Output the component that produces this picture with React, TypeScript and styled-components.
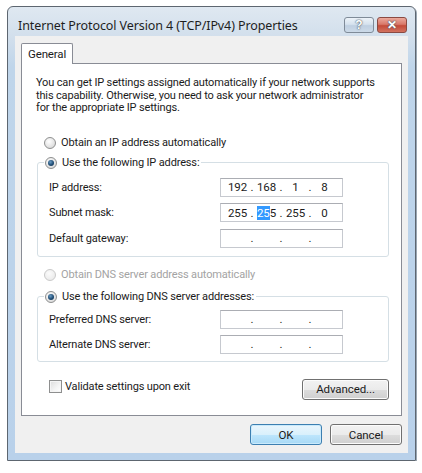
import { createGlobalStyle, styled } from 'styled-components';

const uiFont = `Roboto, "Noto Sans", sans-serif`;

const GlobalStyle = createGlobalStyle`
  html, body {
    margin: 0;
    padding: 0;
    background: #ffffff;
  }
  body {
    font-family: ${uiFont};
    font-size: 11px;
    letter-spacing: -0.15px;
    color: #1b1b1b;
  }
`;

const Window = styled.div`
  box-sizing: border-box;
  margin: 6px 0 0 7px;
  width: 409px;
  height: 455px;
  border: 1px solid #5d6670;
  border-radius: 6px 6px 0 0;
  padding: 0 7px 7px 7px;
  background: linear-gradient(to bottom, #dfe8f1 0px, #d2dfec 30px, #bfd5ea 60px, #b9d1ea 100%);
  box-shadow: 1px 1px 0 #9aa6b2;
  display: flex;
  flex-direction: column;
`;

const TitleBar = styled.div`
  box-sizing: border-box;
  height: 29px;
  display: flex;
  align-items: center;
  justify-content: space-between;
  padding: 7px 1px 0 3px;
  flex-shrink: 0;
`;

const Title = styled.div`
  font-family: "Noto Sans", sans-serif;
  font-size: 12.5px;
  letter-spacing: -0.1px;
  color: #1e1e1e;
`;

const CaptionButtons = styled.div`
  display: flex;
  gap: 3px;
`;

const CaptionButton = styled.div<{ $close?: boolean }>`
  box-sizing: border-box;
  width: 30px;
  height: 16px;
  border: 1px solid ${(p) => (p.$close ? '#8a4a42' : '#7f8b98')};
  border-radius: 3px;
  background: ${(p) =>
    p.$close
      ? 'linear-gradient(to bottom, #eba99c 0%, #d9796a 45%, #c44b39 55%, #d2725f 100%)'
      : 'linear-gradient(to bottom, #edf3f9 0%, #d6e2ee 45%, #bfcfe1 55%, #ccdae8 100%)'};
  display: flex;
  align-items: center;
  justify-content: center;
  color: #ffffff;
  font-family: "Liberation Sans", sans-serif;
  font-weight: bold;
  font-size: 12px;
  letter-spacing: 0;
  text-shadow: 0 0 2px #4a5866, 0 0 1px #4a5866;
  line-height: 1;
`;

const Client = styled.div`
  flex: 1;
  background: #f0f0f0;
  padding: 7px 6px 7px 6px;
  display: flex;
  flex-direction: column;
`;

const TabStrip = styled.div`
  display: flex;
  position: relative;
  z-index: 1;
  margin-bottom: -1px;
  flex-shrink: 0;
`;

const Tab = styled.div`
  box-sizing: border-box;
  width: 52px;
  height: 21px;
  border: 1px solid #898c95;
  border-bottom: none;
  border-radius: 2px 2px 0 0;
  background: #ffffff;
  padding: 3px 0 0 6px;
  font-size: 11.5px;
`;

const Panel = styled.div`
  box-sizing: border-box;
  border: 1px solid #898c95;
  background: #ffffff;
  height: 353px;
  flex-shrink: 0;
  padding: 13px 12px 13px 14px;
  display: flex;
  flex-direction: column;
`;

const Intro = styled.p`
  margin: 0;
  line-height: 12.5px;
  white-space: nowrap;
`;

const RadioRow = styled.label<{ $disabled?: boolean; $top: number }>`
  display: flex;
  align-items: center;
  gap: 5px;
  height: 16px;
  margin-top: ${(p) => p.$top}px;
  padding-left: 8px;
  color: ${(p) => (p.$disabled ? '#a3a3a3' : '#1b1b1b')};
`;

const RadioDot = styled.span<{ $checked?: boolean; $disabled?: boolean }>`
  box-sizing: border-box;
  width: 12px;
  height: 12px;
  border-radius: 50%;
  border: 1px solid ${(p) => (p.$disabled ? '#c9c9c9' : '#8e8f8f')};
  background: ${(p) =>
    p.$disabled
      ? 'radial-gradient(circle at 40% 35%, #fbfbfb 0%, #ececec 70%)'
      : 'radial-gradient(circle at 40% 35%, #ffffff 0%, #e3e3e3 60%, #cfcfcf 100%)'};
  display: flex;
  align-items: center;
  justify-content: center;
  flex-shrink: 0;

  &::after {
    content: '';
    display: ${(p) => (p.$checked ? 'block' : 'none')};
    width: 6px;
    height: 6px;
    border-radius: 50%;
    background: radial-gradient(circle at 40% 35%, #6a9cc4 0%, #1f4c74 55%, #10304e 100%);
  }
`;

const Group = styled.fieldset<{ $top: number; $gap: number; $inset: number; $bottom: number }>`
  margin: ${(p) => p.$top}px 0 0 1px;
  padding: 0 0 ${(p) => p.$bottom}px 0;
  border: 1px solid #d5dfe5;
  border-radius: 3px;
  min-width: 0;

  & > div {
    row-gap: ${(p) => p.$gap}px;
    padding-top: ${(p) => p.$inset}px;
  }
`;

const Legend = styled.legend`
  margin-left: 6px;
  padding: 0 2px 0 1px;
  background: #ffffff;
`;

const LegendRadio = styled(RadioRow)`
  padding-left: 0;
`;

const FieldGrid = styled.div`
  display: grid;
  grid-template-columns: 171px 123px;
  padding-left: 11px;
  align-items: center;
`;

const FieldLabel = styled.span``;

const IpBox = styled.div`
  box-sizing: border-box;
  height: 19px;
  border: 1px solid #c6c9cf;
  border-top-color: #abadb3;
  background: #ffffff;
  display: flex;
  align-items: center;
  padding-left: 5px;
  font-size: 11.5px;
`;

const Octet = styled.span`
  width: 23px;
  text-align: center;
`;

const Dot = styled.span`
  width: 6px;
  text-align: center;
`;

const Selected = styled.span`
  background: #3399ff;
  color: #ffffff;
`;

const Footer = styled.div`
  display: flex;
  justify-content: space-between;
  align-items: flex-start;
  margin-top: 17px;
`;

const CheckRow = styled.label`
  display: flex;
  align-items: center;
  gap: 3px;
  height: 16px;
  padding-left: 13px;
`;

const CheckBox = styled.span`
  box-sizing: border-box;
  width: 13px;
  height: 13px;
  border: 1px solid #8e8f8f;
  background: linear-gradient(135deg, #dcdcdc 0%, #f4f4f4 60%, #ffffff 100%);
  box-shadow: inset 0 0 0 1px #f4f4f4;
`;

const Button = styled.button<{ $default?: boolean; $width: number }>`
  box-sizing: border-box;
  width: ${(p) => p.$width}px;
  height: 21px;
  border-radius: 3px;
  border: 1px solid ${(p) => (p.$default ? '#3c7fb1' : '#707070')};
  background: ${(p) =>
    p.$default
      ? 'linear-gradient(to bottom, #eaf6fd 0%, #d9f0fc 50%, #bee6fd 51%, #a7d9f5 100%)'
      : 'linear-gradient(to bottom, #f2f2f2 0%, #ebebeb 50%, #dddddd 51%, #cfcfcf 100%)'};
  box-shadow: inset 0 0 0 1px ${(p) => (p.$default ? '#c9eafc' : '#fcfcfc')};
  font-family: ${uiFont};
  font-size: 11.5px;
  letter-spacing: -0.1px;
  color: #1b1b1b;
  padding: 0;
`;

const ButtonBar = styled.div`
  display: flex;
  justify-content: flex-end;
  gap: 8px;
  margin-top: 8px;
  flex-shrink: 0;
`;

type IpProps = { octets?: string[]; highlight?: boolean };

function IpField({ octets, highlight }: IpProps) {
  const parts = octets ?? ['', '', '', ''];
  return (
    <IpBox>
      {parts.map((part, i) => (
        <span key={i} style={{ display: 'contents' }}>
          {i > 0 && <Dot>.</Dot>}
          <Octet>
            {highlight && i === 1 ? (
              <>
                <Selected>25</Selected>5
              </>
            ) : (
              part
            )}
          </Octet>
        </span>
      ))}
    </IpBox>
  );
}

export default function App() {
  return (
    <>
      <GlobalStyle />
      <Window>
        <TitleBar>
          <Title>Internet Protocol Version 4 (TCP/IPv4) Properties</Title>
          <CaptionButtons>
            <CaptionButton>?</CaptionButton>
            <CaptionButton $close>✕</CaptionButton>
          </CaptionButtons>
        </TitleBar>
        <Client>
          <TabStrip>
            <Tab>General</Tab>
          </TabStrip>
          <Panel>
            <Intro>
              You can get IP settings assigned automatically if your network supports
              <br />
              this capability. Otherwise, you need to ask your network administrator
              <br />
              for the appropriate IP settings.
            </Intro>

            <RadioRow $top={20}>
              <RadioDot />
              Obtain an IP address automatically
            </RadioRow>

            <Group $top={4} $gap={6.5} $inset={7} $bottom={8}>
              <Legend>
                <LegendRadio $top={0}>
                  <RadioDot $checked />
                  Use the following IP address:
                </LegendRadio>
              </Legend>
              <FieldGrid>
                <FieldLabel>IP address:</FieldLabel>
                <IpField octets={['192', '168', '1', '8']} />
                <FieldLabel>Subnet mask:</FieldLabel>
                <IpField octets={['255', '255', '255', '0']} highlight />
                <FieldLabel>Default gateway:</FieldLabel>
                <IpField />
              </FieldGrid>
            </Group>

            <RadioRow $top={10} $disabled>
              <RadioDot $disabled />
              Obtain DNS server address automatically
            </RadioRow>

            <Group $top={6} $gap={6} $inset={5} $bottom={7}>
              <Legend>
                <LegendRadio $top={0}>
                  <RadioDot $checked />
                  Use the following DNS server addresses:
                </LegendRadio>
              </Legend>
              <FieldGrid>
                <FieldLabel>Preferred DNS server:</FieldLabel>
                <IpField />
                <FieldLabel>Alternate DNS server:</FieldLabel>
                <IpField />
              </FieldGrid>
            </Group>

            <Footer>
              <CheckRow>
                <CheckBox />
                Validate settings upon exit
              </CheckRow>
              <Button $width={87}>Advanced...</Button>
            </Footer>
          </Panel>
          <ButtonBar>
            <Button $default $width={72}>OK</Button>
            <Button $width={72}>Cancel</Button>
          </ButtonBar>
        </Client>
      </Window>
    </>
  );
}
